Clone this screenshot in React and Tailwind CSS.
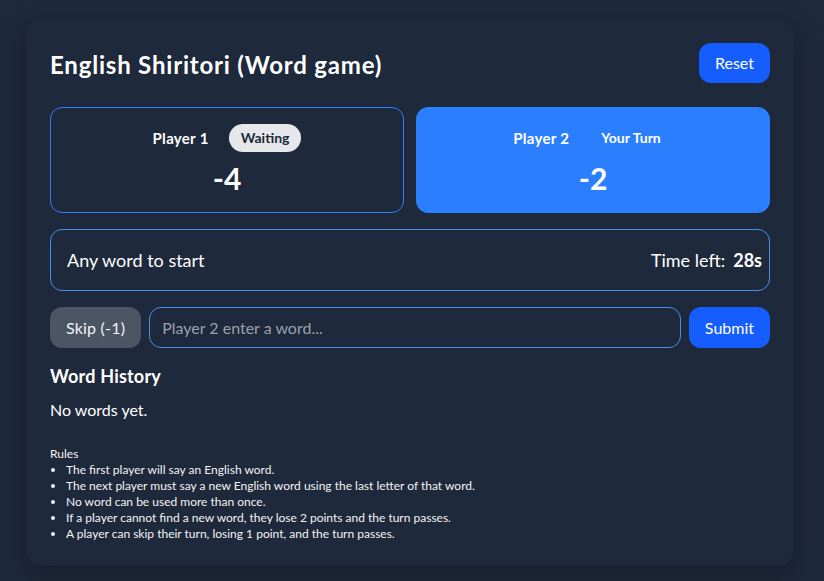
import React, { useState } from 'react';

const rules = [
  'The first player will say an English word.',
  'The next player must say a new English word using the last letter of that word.',
  'No word can be used more than once.',
  'If a player cannot find a new word, they lose 2 points and the turn passes.',
  'A player can skip their turn, losing 1 point, and the turn passes.',
];

function PlayerCard({ name, score, active }) {
  return (
    <div
      className={
        active
          ? 'flex-1 rounded-xl border border-[#2b7fff] bg-[#2b7fff] p-4 text-white'
          : 'flex-1 rounded-xl border border-[#2b7fff] bg-transparent p-4 text-white'
      }
    >
      <div className="flex items-center justify-center gap-5">
        <span className="text-[15px] font-bold tracking-[0.3px]">{name}</span>
        {active ? (
          <span className="rounded-full px-3 py-1 text-sm font-bold text-white">Your Turn</span>
        ) : (
          <span className="rounded-full bg-gray-200 px-3 py-1 text-sm font-bold text-gray-800">Waiting</span>
        )}
      </div>
      <div className="mt-2 text-center text-3xl font-bold leading-9">{score}</div>
    </div>
  );
}

export default function App() {
  const [word, setWord] = useState('');

  return (
    <div className="min-h-screen bg-[#1e293b] pt-[19px] pb-5 pl-4 pr-5 font-['Lato',sans-serif] text-white">
      <div className="mx-auto max-w-3xl rounded-2xl bg-[#1e293b] p-6 shadow-[0_10px_30px_rgba(0,0,0,0.25)]">
        <div className="mb-6 flex items-center justify-between">
          <h1 className="pt-1 text-2xl font-bold tracking-[0.8px]">English Shiritori (Word game)</h1>
          <button className="h-10 rounded-xl bg-[#155dfc] px-4 text-base text-white">Reset</button>
        </div>

        <div className="mb-4 flex gap-3">
          <PlayerCard name="Player 1" score="-4" />
          <PlayerCard name="Player 2" score="-2" active />
        </div>

        <div className="mb-4 flex items-center justify-between rounded-xl border border-[#4a90e2] py-4 pl-4 pr-[7px] text-lg">
          <span>Any word to start</span>
          <span className="flex gap-2">
            <span>Time left:</span>
            <span className="font-bold">28s</span>
          </span>
        </div>

        <div className="flex gap-2">
          <button className="h-[41px] rounded-xl bg-[#4b5563] px-4 text-base tracking-[0.2px] text-gray-100">Skip (-1)</button>
          <input
            value={word}
            onChange={(e) => setWord(e.target.value)}
            placeholder="Player 2 enter a word..."
            className="h-[41px] flex-1 rounded-xl border border-[#4a90e2] bg-transparent px-3 text-base text-white placeholder:text-gray-400 outline-none"
          />
          <button className="h-[41px] rounded-xl bg-[#155dfc] px-4 text-base text-white">Submit</button>
        </div>

        <h2 className="mt-3.5 mb-2 text-lg font-bold tracking-[0.2px]">Word History</h2>
        <p className="text-base">No words yet.</p>

        <div className="mt-6 text-xs leading-4 text-gray-100">
          <div>Rules</div>
          <ul className="list-disc pl-4">
            {rules.map((r) => (
              <li key={r}>{r}</li>
            ))}
          </ul>
        </div>
      </div>
    </div>
  );
}
